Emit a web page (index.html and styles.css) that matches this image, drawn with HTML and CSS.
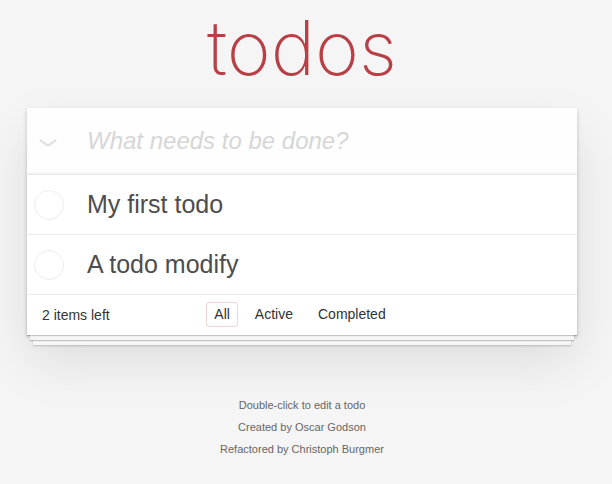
FILE: index.html
```
<!DOCTYPE html>
<html>
<head>
<meta charset="utf-8">
<link rel="stylesheet" href="styles.css">
</head>
<body>
<div class="page">
  <header class="header">
    <h1 class="title">todos</h1>
  </header>
  <section class="todoapp">
    <div class="new-row">
      <div class="toggle-all">
        <svg width="18" height="8" viewBox="0 0 18 8"><path d="M1.5 1.5 L9 6.5 L16.5 1.5" fill="none" stroke="#e3e3e3" stroke-width="2.2" stroke-linecap="round" stroke-linejoin="round"/></svg>
      </div>
      <div class="new-todo">What needs to be done?</div>
    </div>
    <ul class="todo-list">
      <li class="todo">
        <span class="toggle"></span>
        <label class="todo-label">My first todo</label>
      </li>
      <li class="todo">
        <span class="toggle"></span>
        <label class="todo-label">A todo modify</label>
      </li>
    </ul>
    <footer class="footer">
      <span class="todo-count">2 items left</span>
      <ul class="filters">
        <li><a class="filter selected">All</a></li>
        <li><a class="filter">Active</a></li>
        <li><a class="filter">Completed</a></li>
      </ul>
      <span class="spacer"></span>
    </footer>
  </section>
  <footer class="info">
    <p>Double-click to edit a todo</p>
    <p>Created by Oscar Godson</p>
    <p>Refactored by Christoph Burgmer</p>
  </footer>
</div>
</body>
</html>
```
FILE: styles.css
```
html, body {
  margin: 0;
  padding: 0;
}
body {
  background: #f5f5f5;
  font-family: "Liberation Sans", Arial, sans-serif;
  font-size: 14px;
  color: #4d4d4d;
}
.page {
  width: 550px;
  margin: 0 0 0 27px;
}
.header {
  height: 108px;
}
.title {
  margin: 0;
  padding-top: 2px;
  font-family: Inter, "Liberation Sans", sans-serif;
  font-weight: 200;
  font-size: 75px;
  line-height: 92px;
  text-align: center;
  color: #b83f45;
}
.todoapp {
  position: relative;
  background: #fff;
  box-shadow: 0 2px 4px 0 rgba(0,0,0,0.2), 0 25px 50px 0 rgba(0,0,0,0.1);
}
.new-row {
  display: flex;
  align-items: center;
  height: 66px;
  background: rgba(0,0,0,0.003);
  box-shadow: inset 0 -2px 1px rgba(0,0,0,0.03);
}
.toggle-all {
  width: 42px;
  display: flex;
  justify-content: center;
  padding-top: 4px;
}
.new-todo {
  margin-left: 18px;
  font-size: 24px;
  font-style: italic;
  color: #d6d6d6;
}
.todo-list {
  list-style: none;
  margin: 0;
  padding: 0;
  border-top: 1px solid #e6e6e6;
}
.todo {
  display: flex;
  align-items: center;
  height: 59px;
  border-bottom: 1px solid #ededed;
}
.toggle {
  width: 30px;
  height: 30px;
  border: 1px solid #ededed;
  border-radius: 50%;
  margin: 0 23px 0 7px;
  box-sizing: border-box;
}
.todo-label {
  font-size: 25px;
  color: #4d4d4d;
}
.footer {
  position: relative;
  display: grid;
  grid-template-columns: 1fr auto 1fr;
  align-items: center;
  height: 20px;
  padding: 7px 15px 13px;
  color: #333;
  line-height: 20px;
}
.footer::before {
  content: "";
  position: absolute;
  left: 0;
  right: 0;
  bottom: 0;
  height: 50px;
  overflow: hidden;
  box-shadow: 0 1px 1px rgba(0,0,0,0.2), 0 8px 0 -3px #f6f6f6, 0 9px 1px -3px rgba(0,0,0,0.2), 0 16px 0 -6px #f6f6f6, 0 17px 2px -6px rgba(0,0,0,0.2);
}
.todo-count {
  position: relative;
}
.filters {
  position: relative;
  display: flex;
  list-style: none;
  margin: 0 0 0 -4px;
  padding: 0;
  gap: 3px;
}
.filter {
  display: block;
  margin: 0 3px;
  padding: 3px 7px;
  border: 1px solid transparent;
  border-radius: 3px;
  line-height: 17px;
}
.filter.selected {
  border-color: rgba(175,47,47,0.2);
}
.info {
  margin-top: 65px;
  text-align: center;
  font-size: 11px;
  color: #666;
}
.info p {
  line-height: 1;
  margin: 11px 0;
}
```
